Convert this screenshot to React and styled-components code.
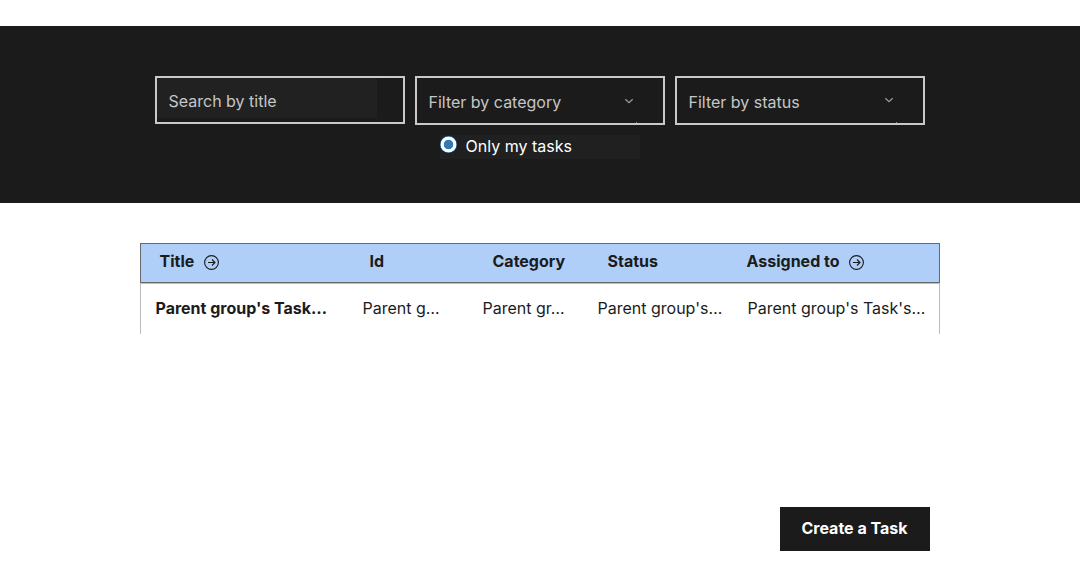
import React from 'react';
import styled, { createGlobalStyle } from 'styled-components';

const GlobalStyle = createGlobalStyle`
  * { box-sizing: border-box; }
  body { margin: 0; background: #fff; color: #1b1b1b; font: 16px/24px Inter, sans-serif; }
`;
const Page = styled.main`
  height: 572px;
  padding-top: 26px;
  overflow: hidden;
`;
const FilterBar = styled.section`
  height: 177px;
  padding-top: 50px;
  background: #1b1b1b;
`;
const Fields = styled.div`
  display: flex;
  gap: 10px;
  width: 770px;
  margin: 0 auto;
`;
const Field = styled.div`
  display: flex;
  justify-content: space-between;
  width: 250px;
  height: 49px;
  padding: 12px 28px 0 11.5px;
  border: 2px solid #c9c9c9;
  color: #c6c6c6;
`;
const SearchField = styled(Field)`
  height: 48px;
  padding: 0;
`;
const SelectBox = styled(Field)`
  position: relative;
  &::after {
    content: '';
    position: absolute;
    right: 26px;
    bottom: 0;
    width: 1px;
    height: 1px;
    background: #888;
  }
`;
const SearchInput = styled.input`
  width: 220px;
  height: 40px;
  padding: 6px 0 0 11.5px;
  border: 0;
  outline: 0;
  background: #212121;
  color: #fff;
  font: inherit;
  &::placeholder { color: #c6c6c6; opacity: 1; }
`;
const Chevron = styled.svg`
  width: 12px;
  height: 12px;
  margin-top: ${(p) => p.$top}px;
  fill: none;
  stroke: #999;
  stroke-width: 1.3;
`;
const Option = styled.label`
  display: flex;
  align-items: flex-start;
  width: 200px;
  height: 24px;
  margin: 10px 0 0 440px;
  background: #202020;
  color: #fff;
  line-height: 23px;
`;
const Radio = styled.span`
  width: 17px;
  height: 17px;
  margin: 1px 8.5px 0 0;
  border-radius: 50%;
  background: radial-gradient(circle, #3279b6 4.4px, #fff 5.1px, #fff 7.5px, #3279b6 8.2px);
`;
const Table = styled.section`
  width: 800px;
  margin: 40px auto 0;
`;
const HeaderRow = styled.div`
  display: flex;
  height: 40px;
  padding: 5px 0 0 18.5px;
  border: 1px solid #686868;
  background: #afcef8;
  font-weight: 700;
`;
const HeaderCell = styled.div`
  display: flex;
  gap: ${(p) => p.$gap || 9}px;
  flex: 0 0 ${(p) => p.$width}px;
  white-space: nowrap;
`;
const SortIcon = styled.svg`
  flex: none;
  width: 15px;
  height: 15px;
  margin-top: 6px;
  fill: none;
  stroke: #1b1b1b;
  stroke-width: 1.1;
`;
const DataRow = styled.div`
  display: flex;
  height: 51px;
  padding: 12px 0 0 14.5px;
  border: solid #bcbcbc;
  border-width: 1px 1px 0;
`;
const Cell = styled.div`
  flex: 0 0 ${(p) => p.$width}px;
  font-weight: ${(p) => (p.$bold ? 700 : 400)};
  white-space: nowrap;
`;
const Actions = styled.div`
  display: flex;
  justify-content: flex-end;
  width: 780px;
  margin: 173px auto 0;
`;
const CreateButton = styled.button`
  width: 150px;
  height: 44px;
  padding: 0 1px 2px 0;
  border: 0;
  background: #1b1b1b;
  color: #fff;
  font: 700 16px/24px Inter, sans-serif;
`;

const columns = [
  { label: 'Title', width: 210, sortable: true, gap: 10 },
  { label: 'Id', width: 123 },
  { label: 'Category', width: 115 },
  { label: 'Status', width: 139 },
  { label: 'Assigned to', width: 150, sortable: true },
];
const cells = [
  { text: "Parent group's Task…", width: 207, bold: true },
  { text: 'Parent g…', width: 120 },
  { text: 'Parent gr…', width: 115 },
  { text: "Parent group's…", width: 150 },
  { text: "Parent group's Task's…", width: 180 },
];

const CircleArrow = () => (
  <SortIcon viewBox="0 0 15 15">
    <circle cx="7.5" cy="7.5" r="6.9" />
    <path d="M4 7.5h7M8 4.5l3 3-3 3" />
  </SortIcon>
);
const SelectField = ({ label, iconTop }) => (
  <SelectBox>
    {label}
    <Chevron $top={iconTop} viewBox="0 0 12 12"><path d="M2.3 4.2L6 7.7 9.7 4.2" /></Chevron>
  </SelectBox>
);

export default function App() {
  return (
    <>
      <GlobalStyle />
      <Page>
        <FilterBar>
          <Fields>
            <SearchField><SearchInput placeholder="Search by title" /></SearchField>
            <SelectField label="Filter by category" iconTop={5} />
            <SelectField label="Filter by status" iconTop={4} />
          </Fields>
          <Option><Radio />Only my tasks</Option>
        </FilterBar>
        <Table>
          <HeaderRow>
            {columns.map((c) => (
              <HeaderCell key={c.label} $width={c.width} $gap={c.gap}>{c.label}{c.sortable && <CircleArrow />}</HeaderCell>
            ))}
          </HeaderRow>
          <DataRow>
            {cells.map((c) => <Cell key={c.text} $width={c.width} $bold={c.bold}>{c.text}</Cell>)}
          </DataRow>
        </Table>
        <Actions><CreateButton>Create a Task</CreateButton></Actions>
      </Page>
    </>
  );
}
